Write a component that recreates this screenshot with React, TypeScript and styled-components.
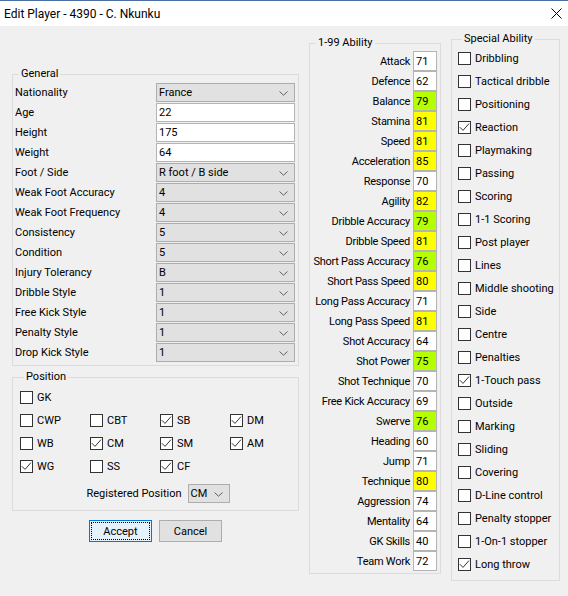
import React from "react";
import styled, { createGlobalStyle } from "styled-components";

const FONT = `"Segoe UI", Roboto, "Liberation Sans", sans-serif`;

const Global = createGlobalStyle`
  html, body { margin: 0; padding: 0; background: #f0f0f0; }
  body { font-family: ${FONT}; font-size: 11px; color: #000; }
  * { box-sizing: border-box; }
`;

const Window = styled.div`
  width: 568px;
  height: 596px;
  background: #f0f0f0;
  display: flex;
  flex-direction: column;
  overflow: hidden;
`;

const TitleBar = styled.div`
  height: 26px;
  flex: none;
  background: #fff;
  border-top: 1px solid #4a6fa5;
  display: flex;
  align-items: center;
  justify-content: space-between;
  padding: 0 6px 0 4px;
`;

const TitleText = styled.span`
  font-size: 12px;
`;

const Body = styled.div`
  display: flex;
  align-items: flex-start;
  padding-left: 12px;
  gap: 10px;
`;

const LeftCol = styled.div`
  width: 287px;
  margin-top: 40px;
  display: flex;
  flex-direction: column;
`;

const Group = styled.fieldset<{ $w?: number; $mt?: number; $pad: string }>`
  margin: ${(p) => p.$mt ?? 0}px 0 0 0;
  ${(p) => (p.$w ? `width: ${p.$w}px;` : "")}
  flex: none;
  border: 1px solid #dcdcdc;
  padding: ${(p) => p.$pad};
  min-width: 0;
`;

const Legend = styled.legend`
  padding: 0 2px;
  margin-left: 4px;
  line-height: 16px;
  font-size: 11px;
`;

const GeneralGrid = styled.div`
  display: grid;
  grid-template-columns: 141px 139px;
  grid-auto-rows: 19px;
  row-gap: 1px;
  align-items: center;
`;

const FieldLabel = styled.span`
  white-space: nowrap;
`;

const Combo = styled.div<{ $w?: number }>`
  height: 19px;
  ${(p) => (p.$w ? `width: ${p.$w}px;` : "")}
  background: #e1e1e1;
  border: 1px solid #adadad;
  display: flex;
  align-items: center;
  justify-content: space-between;
  padding: 0 6px 0 2px;
  white-space: nowrap;
`;

const TextInput = styled.div`
  height: 19px;
  background: #fff;
  border: 1px solid #b4b4b4;
  display: flex;
  align-items: center;
  padding-left: 2px;
`;

const Chevron = () => (
  <svg width="9" height="5" viewBox="0 0 9 5" style={{ flex: "none", marginTop: 2 }}>
    <polyline points="0.5,0.5 4.5,4.2 8.5,0.5" fill="none" stroke="#606060" strokeWidth="1" />
  </svg>
);

const PosGrid = styled.div`
  display: grid;
  grid-template-columns: repeat(4, 70px);
  grid-auto-rows: 23px;
  align-items: center;
`;

const RegRow = styled.div`
  display: flex;
  justify-content: center;
  align-items: center;
  gap: 6px;
  margin-top: 5px;
  height: 20px;
`;

const ButtonRow = styled.div`
  display: flex;
  justify-content: center;
  gap: 7px;
  margin-top: 9px;
`;

const Button = styled.div<{ $default?: boolean }>`
  width: 63px;
  height: 22px;
  display: flex;
  align-items: center;
  justify-content: center;
  background: ${(p) => (p.$default ? "#e5f1fb" : "#e1e1e1")};
  border: 1px solid ${(p) => (p.$default ? "#0078d7" : "#adadad")};
  padding: 1px;
`;

const Focus = styled.div`
  width: 100%;
  height: 100%;
  border: 1px dotted #000;
  display: flex;
  align-items: center;
  justify-content: center;
`;

const CheckRow = styled.label`
  display: flex;
  align-items: center;
  gap: 4px;
  white-space: nowrap;
`;

const Box = styled.span`
  width: 13px;
  height: 13px;
  flex: none;
  border: 1px solid #333;
  background: #fff;
  display: flex;
`;

const Check = ({ checked, label }: { checked: boolean; label: string }) => (
  <CheckRow>
    <Box>
      {checked && (
        <svg width="11" height="11" viewBox="0 0 11 11">
          <polyline points="0.8,5.2 4,8.4 10,1.6" fill="none" stroke="#333" strokeWidth="1" />
        </svg>
      )}
    </Box>
    {label}
  </CheckRow>
);

const AbilityGrid = styled.div`
  display: grid;
  grid-template-columns: minmax(0, 1fr) 24px;
  grid-auto-rows: 20px;
  column-gap: 3px;
`;

const AbilityLabel = styled.span`
  text-align: right;
  align-self: center;
  white-space: nowrap;
  letter-spacing: -0.25px;
`;

const Value = styled.div<{ $bg: string }>`
  background: ${(p) => p.$bg};
  border: 1px solid #b4b4b4;
  height: 20px;
  display: flex;
  align-items: center;
  padding-left: 2px;
`;

const SpecialList = styled.div`
  display: grid;
  grid-auto-rows: 23px;
  align-items: center;
`;

const general: [string, string, boolean][] = [
  ["Nationality", "France", true],
  ["Age", "22", false],
  ["Height", "175", false],
  ["Weight", "64", false],
  ["Foot / Side", "R foot / B side", true],
  ["Weak Foot Accuracy", "4", true],
  ["Weak Foot Frequency", "4", true],
  ["Consistency", "5", true],
  ["Condition", "5", true],
  ["Injury Tolerancy", "B", true],
  ["Dribble Style", "1", true],
  ["Free Kick Style", "1", true],
  ["Penalty Style", "1", true],
  ["Drop Kick Style", "1", true],
];

const positions: ([string, boolean] | null)[] = [
  ["GK", false], null, null, null,
  ["CWP", false], ["CBT", false], ["SB", true], ["DM", true],
  ["WB", false], ["CM", true], ["SM", true], ["AM", true],
  ["WG", true], ["SS", false], ["CF", true], null,
];

const abilities: [string, number][] = [
  ["Attack", 71], ["Defence", 62], ["Balance", 79], ["Stamina", 81], ["Speed", 81],
  ["Acceleration", 85], ["Response", 70], ["Agility", 82], ["Dribble Accuracy", 79],
  ["Dribble Speed", 81], ["Short Pass Accuracy", 76], ["Short Pass Speed", 80],
  ["Long Pass Accuracy", 71], ["Long Pass Speed", 81], ["Shot Accuracy", 64],
  ["Shot Power", 75], ["Shot Technique", 70], ["Free Kick Accuracy", 69], ["Swerve", 76],
  ["Heading", 60], ["Jump", 71], ["Technique", 80], ["Aggression", 74], ["Mentality", 64],
  ["GK Skills", 40], ["Team Work", 72],
];

const specials: [string, boolean][] = [
  ["Dribbling", false], ["Tactical dribble", false], ["Positioning", false], ["Reaction", true],
  ["Playmaking", false], ["Passing", false], ["Scoring", false], ["1-1 Scoring", false],
  ["Post player", false], ["Lines", false], ["Middle shooting", false], ["Side", false],
  ["Centre", false], ["Penalties", false], ["1-Touch pass", true], ["Outside", false],
  ["Marking", false], ["Sliding", false], ["Covering", false], ["D-Line control", false],
  ["Penalty stopper", false], ["1-On-1 stopper", false], ["Long throw", true],
];

const valueColor = (v: number) => (v >= 80 ? "#ffff00" : v >= 75 ? "#b4ff00" : "#ffffff");

export default function App() {
  return (
    <>
      <Global />
      <Window>
        <TitleBar>
          <TitleText>Edit Player - 4390 - C. Nkunku</TitleText>
          <svg width="11" height="11" viewBox="0 0 11 11">
            <line x1="0.5" y1="0.5" x2="10.5" y2="10.5" stroke="#000" strokeWidth="1" />
            <line x1="10.5" y1="0.5" x2="0.5" y2="10.5" stroke="#000" strokeWidth="1" />
          </svg>
        </TitleBar>
        <Body>
          <LeftCol>
            <Group $pad="1px 2px 3px 2px">
              <Legend>General</Legend>
              <GeneralGrid>
                {general.map(([label, value, combo]) => (
                  <React.Fragment key={label}>
                    <FieldLabel>{label}</FieldLabel>
                    {combo ? (
                      <Combo>
                        <span>{value}</span>
                        <Chevron />
                      </Combo>
                    ) : (
                      <TextInput>{value}</TextInput>
                    )}
                  </React.Fragment>
                ))}
              </GeneralGrid>
            </Group>
            <Group $mt={3} $pad="1px 2px 7px 7px">
              <Legend>Position</Legend>
              <PosGrid>
                {positions.map((p, i) =>
                  p ? <Check key={i} label={p[0]} checked={p[1]} /> : <span key={i} />
                )}
              </PosGrid>
              <RegRow>
                <span>Registered Position</span>
                <Combo $w={42}>
                  <span>CM</span>
                  <Chevron />
                </Combo>
              </RegRow>
            </Group>
            <ButtonRow>
              <Button $default>
                <Focus>Accept</Focus>
              </Button>
              <Button>Cancel</Button>
            </ButtonRow>
          </LeftCol>
          <Group $w={132} $mt={9} $pad="0px 3px 2px 2px">
            <Legend>1-99 Ability</Legend>
            <AbilityGrid>
              {abilities.map(([label, v]) => (
                <React.Fragment key={label}>
                  <AbilityLabel>{label}</AbilityLabel>
                  <Value $bg={valueColor(v)}>{v}</Value>
                </React.Fragment>
              ))}
            </AbilityGrid>
          </Group>
          <Group $w={109} $mt={5} $pad="0px 2px 4px 6px">
            <Legend>Special Ability</Legend>
            <SpecialList>
              {specials.map(([label, c]) => (
                <Check key={label} label={label} checked={c} />
              ))}
            </SpecialList>
          </Group>
        </Body>
      </Window>
    </>
  );
}
